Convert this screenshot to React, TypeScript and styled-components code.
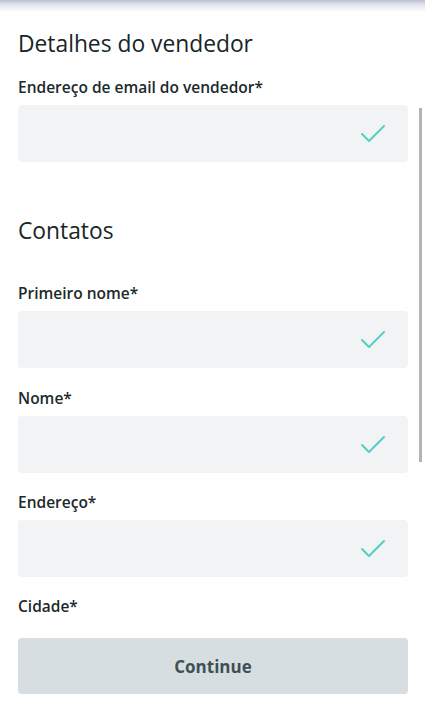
import React from "react";
import styled, { createGlobalStyle } from "styled-components";

const Global = createGlobalStyle`
  html, body { margin: 0; padding: 0; background: #ffffff; }
  body { font-family: "Open Sans", "Noto Sans", sans-serif; color: #1c2a2b; }
  * { box-sizing: border-box; }
`;

const Page = styled.div`
  width: 425px;
  height: 708px;
  overflow: hidden;
  display: flex;
  flex-direction: column;
  position: relative;
`;

const TopShadow = styled.div`
  height: 12px;
  flex: none;
  background: linear-gradient(to bottom, #b9bdd0 0%, #dfe1ea 35%, #ffffff 100%);
`;

const Content = styled.main`
  display: flex;
  flex-direction: column;
  padding: 0 17px 0 18px;
`;

const Heading = styled.h2<{ $top: number; $bottom: number }>`
  margin: ${(p) => p.$top}px 0 ${(p) => p.$bottom}px;
  font-size: 22.8px;
  line-height: 30px;
  font-weight: 400;
  color: #172626;
`;

const Field = styled.div<{ $after: number }>`
  display: flex;
  flex-direction: column;
  gap: 8px;
  margin-bottom: ${(p) => p.$after}px;
`;

const Label = styled.label`
  font-size: 15.5px;
  line-height: 20px;
  font-weight: 600;
  color: #1c2a2b;
`;

const InputBox = styled.div`
  height: 57px;
  border-radius: 4px;
  background: #f2f3f5;
  display: flex;
  align-items: center;
  justify-content: flex-end;
  padding-right: 22px;
`;

const Button = styled.button`
  height: 56px;
  width: 100%;
  border: none;
  border-radius: 4px;
  background: #d7dee1;
  color: #3f5055;
  font-family: "Open Sans", "Noto Sans", sans-serif;
  font-size: 17px;
  font-weight: 700;
`;

const Scrollbar = styled.div`
  position: absolute;
  right: 3px;
  top: 108px;
  width: 3px;
  height: 354px;
  background: #b3b3b3;
`;

const Check = () => (
  <svg width="26" height="20" viewBox="0 0 26 20" fill="none">
    <path d="M2 10 L9 17 L24 2" stroke="#55cfc3" strokeWidth="2" strokeLinecap="round" strokeLinejoin="round" />
  </svg>
);

const FormField = ({ label, after, input = true }: { label: string; after: number; input?: boolean }) => (
  <Field $after={after}>
    <Label>{label}</Label>
    {input && (
      <InputBox>
        <Check />
      </InputBox>
    )}
  </Field>
);

export default function App() {
  return (
    <Page>
      <Global />
      <TopShadow />
      <Content>
        <Heading $top={17} $bottom={18}>Detalhes do vendedor</Heading>
        <FormField label="Endereço de email do vendedor*" after={54} />
        <Heading $top={0} $bottom={37}>Contatos</Heading>
        <FormField label="Primeiro nome*" after={20} />
        <FormField label="Nome*" after={19} />
        <FormField label="Endereço*" after={19} />
        <FormField label="Cidade*" after={22} input={false} />
        <Button>Continue</Button>
      </Content>
      <Scrollbar />
    </Page>
  );
}
